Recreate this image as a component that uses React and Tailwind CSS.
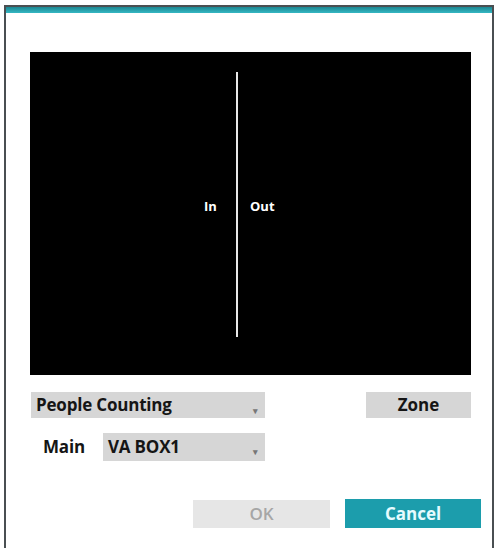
import { useState } from 'react';

const font = { fontFamily: '"Open Sans", "Noto Sans", Arial, sans-serif' };

function Select({ value, width, height }) {
  return (
    <div
      className={`relative flex items-center bg-[#d6d6d6] pl-[5px] text-[17px] font-bold tracking-[-0.2px] text-[#151515] ${width} ${height}`}
    >
      <span>{value}</span>
      <span className="absolute right-[7px] top-[14px] text-[9px] leading-none text-[#777]">▾</span>
    </div>
  );
}

export default function App() {
  const [mode] = useState('People Counting');

  return (
    <div className="h-[548px] w-[495px] overflow-hidden bg-white" style={font}>
      <div className="ml-[4px] mt-[5px] h-[560px] w-[490px] border-x-2 border-t-2 border-[#4a4f52] bg-white">
        {/* title strip */}
        <div className="h-[6px] bg-gradient-to-b from-[#1c8792] to-[#35b8c4]" />

        {/* video preview with counting line */}
        <div className="relative ml-[24px] mt-[39px] h-[323px] w-[441px] bg-black">
          <div className="absolute left-[206px] top-[20px] h-[265px] w-[2px] bg-[#e8e8e8]" />
          <span className="absolute left-[174px] top-[145px] text-[13px] font-bold text-white">In</span>
          <span className="absolute left-[220px] top-[145px] text-[13px] font-bold text-white">Out</span>
        </div>

        <div className="ml-[25px] mt-[17px] flex w-[440px] items-center justify-between">
          <Select value={mode} width="w-[234px]" height="h-[26px]" />
          <button className="h-[26px] w-[105px] bg-[#d6d6d6] text-[17px] font-bold text-[#151515]">
            Zone
          </button>
        </div>

        <div className="ml-[37px] mt-[15px] flex items-center">
          <span className="w-[60px] text-[17px] font-bold tracking-[-0.2px] text-[#151515]">Main</span>
          <Select value="VA BOX1" width="w-[162px]" height="h-[28px]" />
        </div>

        <div className="ml-[187px] mt-[38px] flex items-center gap-[15px]">
          <button disabled className="h-[28px] w-[137px] bg-[#e6e6e6] text-[17px] font-semibold text-[#a6a6a6]">
            OK
          </button>
          <button className="h-[29px] w-[136px] bg-[#1c9dac] text-[17px] font-bold text-[#e6fbff]">
            Cancel
          </button>
        </div>
      </div>
    </div>
  );
}
